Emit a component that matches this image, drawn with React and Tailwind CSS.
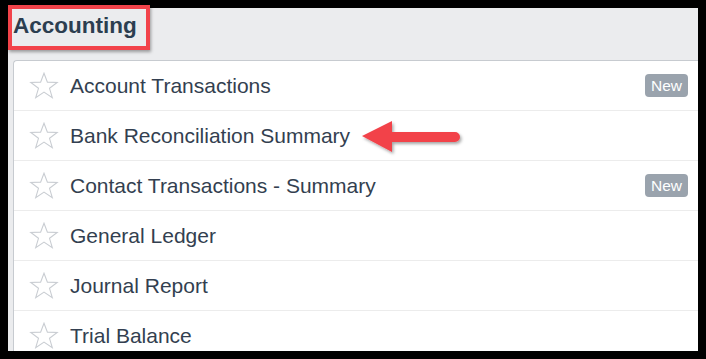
import React from 'react';

const reports = [
  { name: 'Account Transactions', isNew: true },
  { name: 'Bank Reconciliation Summary' },
  { name: 'Contact Transactions - Summary', isNew: true },
  { name: 'General Ledger' },
  { name: 'Journal Report' },
  { name: 'Trial Balance' },
];

function StarIcon() {
  return (
    <svg width="30" height="27" viewBox="0 0 30 27" className="shrink-0">
      <path
        d="M15 1.2 L18.4 10.1 L28.2 10.4 L20.5 16.3 L23.3 25.6 L15 20.1 L6.7 25.6 L9.5 16.3 L1.8 10.4 L11.6 10.1 Z"
        fill="none"
        stroke="#c9cdd2"
        strokeWidth="1.1"
        strokeLinejoin="miter"
      />
    </svg>
  );
}

function Arrow() {
  return (
    <svg width="112" height="44" viewBox="0 0 112 44" className="absolute left-[356px] top-[116px]">
      <defs>
        <filter id="sh" x="-10%" y="-20%" width="130%" height="160%">
          <feDropShadow dx="1.5" dy="2" stdDeviation="1.5" floodColor="#000" floodOpacity="0.35" />
        </filter>
      </defs>
      <g filter="url(#sh)">
        <path d="M6 20 L36 5 L36 16 L99 16 A5 5 0 0 1 99 26 L36 26 L36 36 Z" fill="#f2434a" />
      </g>
    </svg>
  );
}

export default function App() {
  return (
    <div className="relative w-[706px] h-[359px] bg-black p-[8px] overflow-hidden" style={{ fontFamily: '"Liberation Sans", Arial, sans-serif' }}>
      <div className="w-[690px] h-[343px] bg-[#ebecee] flex flex-col overflow-hidden">
        <div className="h-[52px] shrink-0 pl-[5px] pt-[4px]">
          <h1 className="text-[22.5px] leading-[28px] font-bold text-[#2c3e50]">Accounting</h1>
        </div>
        <div className="ml-[5px] flex-1 bg-white border-t border-l border-[#c7cbd0] rounded-tl-[4px] overflow-hidden">
          {reports.map((r) => (
            <div key={r.name} className="h-[50px] flex items-center border-b border-[#ececec] pl-[15px] pr-[10px]">
              <StarIcon />
              <span className="ml-[11px] text-[21px] text-[#333f50] flex-1">{r.name}</span>
              {r.isNew && (
                <span className="bg-[#9aa3ad] text-white text-[15.5px] leading-[23px] h-[23px] px-[6px] rounded-[4px]">New</span>
              )}
            </div>
          ))}
        </div>
      </div>
      <div className="absolute left-[8px] top-[5px] w-[142px] h-[45px] border-[4px] border-[#f2434a] shadow-[1px_2px_3px_rgba(0,0,0,0.35)]" />
      <Arrow />
    </div>
  );
}
